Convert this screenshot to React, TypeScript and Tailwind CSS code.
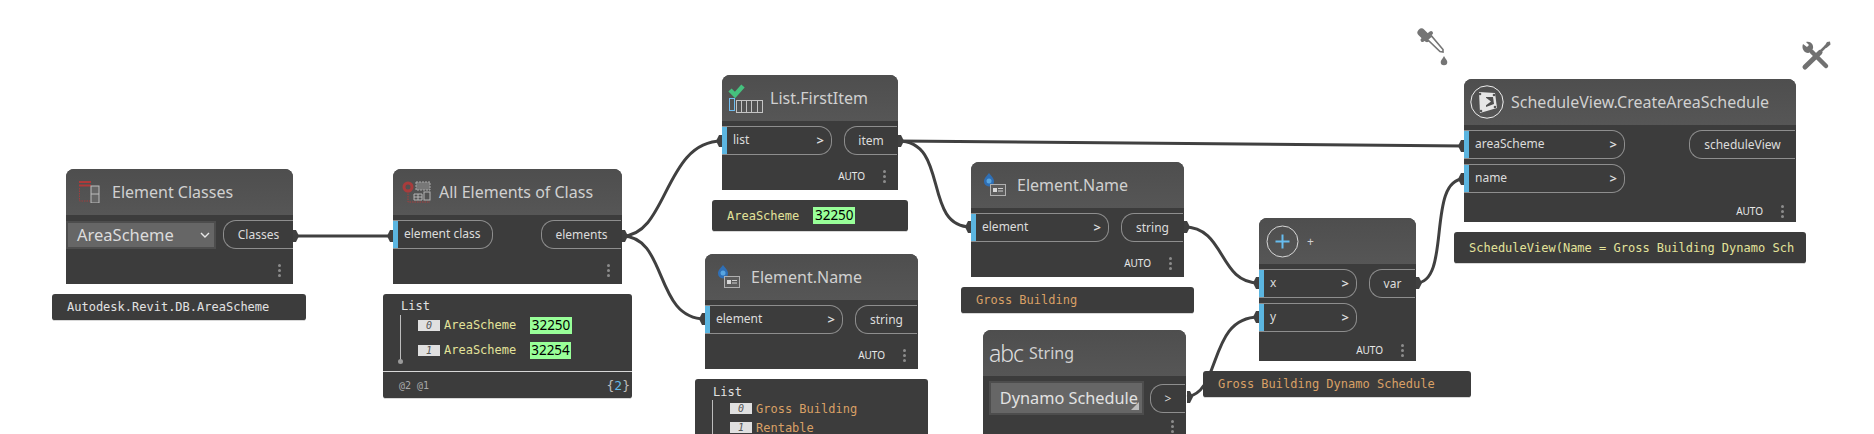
import type { ReactNode } from "react";

const sans = "font-['Noto_Sans',sans-serif]";
const mono = "font-['DejaVu_Sans_Mono',monospace]";

const wires = [
  "M293 236 L393 236",
  "M622 236 C668 236 664 141 722 141",
  "M622 236 C668 236 654 319 705 319",
  "M898 141 L1464 146",
  "M898 141 C950 141 922 227 971 227",
  "M1184 227 C1226 227 1218 283 1259 283",
  "M1187 397 C1222 392 1208 317 1259 317",
  "M1416 283 C1452 283 1426 179 1464 179",
];

const outPorts = [
  [293, 236],
  [622, 236],
  [898, 141],
  [1184, 227],
  [1187, 397],
  [1416, 283],
];
const inPorts = [
  [393, 236],
  [722, 141],
  [705, 319],
  [971, 227],
  [1259, 283],
  [1259, 317],
  [1464, 146],
  [1464, 179],
];

function Dots() {
  return (
    <div className="flex flex-col gap-[2px]">
      <span className="h-[3px] w-[3px] rounded-full bg-[#8c8c8c]" />
      <span className="h-[3px] w-[3px] rounded-full bg-[#8c8c8c]" />
      <span className="h-[3px] w-[3px] rounded-full bg-[#8c8c8c]" />
    </div>
  );
}

function Node({
  className,
  icon,
  title,
  auto = true,
  children,
  titleClass = "text-[16px]",
}: {
  className: string;
  icon: ReactNode;
  title: string;
  auto?: boolean;
  children: ReactNode;
  titleClass?: string;
}) {
  return (
    <div className={`absolute flex flex-col bg-[#3c3c3c] rounded-t-[8px] ${sans} ${className}`}>
      <div className="flex h-[46px] shrink-0 items-center rounded-t-[8px] bg-gradient-to-b from-[#4e4e4e] to-[#565656] text-[#d0d0d0]">
        {icon}
        <span className={titleClass}>{title}</span>
      </div>
      <div className="flex flex-col gap-[5px] pt-[5px]">{children}</div>
      <div className="flex flex-1 items-center justify-end gap-[18px] pt-[7px] pr-[12px]">
        {auto && <span className="text-[10px] text-[#e8e8e8]">AUTO</span>}
        <Dots />
      </div>
    </div>
  );
}

function InPill({ label, className }: { label: string; className: string }) {
  return (
    <div
      className={`flex h-[29px] items-center justify-between rounded-r-[13px] border border-l-0 border-[#8e8e8e] pr-[7px] pl-[11px] shadow-[inset_5px_0_0_#5bb5e0] text-[12px] text-[#dcdcdc] ${className}`}
    >
      <span className="pb-[1px]">{label}</span>
      <span className="text-[13px] font-semibold">&gt;</span>
    </div>
  );
}

function OutPill({ label, className }: { label: string; className: string }) {
  return (
    <div
      className={`flex h-[29px] items-center justify-center rounded-l-[13px] border border-r-0 border-[#8e8e8e] pt-[1px] text-[12px] text-[#dcdcdc] ${className}`}
    >
      {label}
    </div>
  );
}

function Info({ className, children }: { className: string; children: ReactNode }) {
  return (
    <div
      className={`absolute rounded-[3px] border-b border-[#d8d8d8] bg-[#3c3c3c] text-[12px] ${mono} ${className}`}
    >
      {children}
    </div>
  );
}

function Chip({ value, className = "w-[42px]" }: { value: string; className?: string }) {
  return (
    <span
      className={`flex h-[17px] items-center justify-center bg-[#99ff99] text-[13.5px] text-black ${sans} ${className}`}
    >
      {value}
    </span>
  );
}

function Index({ n }: { n: string }) {
  return (
    <span className="flex h-[11px] w-[22px] items-center justify-center bg-[#e0e0e0] text-[10px] italic text-[#555]">
      {n}
    </span>
  );
}

function ListTree({ height }: { height: string }) {
  return (
    <div className={`absolute left-[17px] top-[21px] w-[1px] bg-[#bdbdbd] ${height}`}>
      <span className="absolute -left-[2px] -bottom-[2px] h-[5px] w-[5px] rounded-full bg-[#9a9a9a]" />
    </div>
  );
}

function ClassesIcon() {
  return (
    <svg width="26" height="22" viewBox="0 0 26 22" className="ml-[10px] mr-[10px]" fill="none">
      <path d="M3 1H15M3 4.500H15" stroke="#b03a3a" strokeWidth="2" />
      <path d="M3.500 7V20H14" stroke="#9c3f3f" strokeDasharray="1.500 1" />
      <rect x="15" y="5" width="8" height="17" fill="#666" stroke="#bdbdbd" />
      <path d="M15 13H23" stroke="#bdbdbd" />
    </svg>
  );
}

function AllElementsIcon() {
  return (
    <svg width="30" height="24" viewBox="0 0 30 24" className="ml-[9px] mr-[7px]" fill="none">
      <circle cx="6" cy="7" r="4" fill="none" stroke="#a83c3c" strokeWidth="3" />
      <path d="M6 11V22H28" stroke="#a83c3c" strokeDasharray="1.500 1" />
      <rect x="14" y="2" width="14" height="8" fill="#777" stroke="#a8a8a8" strokeDasharray="2 1" />
      <path d="M12 14H20V20H12ZM16 14V20M12 17H20" stroke="#b5b5b5" />
      <rect x="22" y="12" width="6" height="8" stroke="#b5b5b5" />
    </svg>
  );
}

function FirstItemIcon() {
  return (
    <svg width="36" height="30" viewBox="0 0 36 30" className="ml-[6px] mr-[6px]" fill="none">
      <path d="M2 7L7 12L15 3" stroke="#45c17e" strokeWidth="4.500" />
      <rect x="1.500" y="15.500" width="5" height="12" stroke="#6fbdf0" />
      <rect x="8.500" y="17.500" width="26" height="12" stroke="#c4c4c4" />
      <path d="M13.500 18V29M18.500 18V29M23.500 18V29M29.500 18V29" stroke="#c4c4c4" />
    </svg>
  );
}

function NameIcon() {
  return (
    <svg width="24" height="24" viewBox="0 0 24 24" className="ml-[12px] mr-[10px]" fill="none">
      <path d="M6 0C8 3 11 5 11 8.500A5 5 0 0 1 1 8.500C1 5 4 3 6 0Z" fill="#2f6fb5" />
      <circle cx="6" cy="8" r="2.500" fill="#58a5e0" />
      <rect x="7.500" y="11.500" width="15" height="11" fill="#5c5c5c" stroke="#b0b0b0" />
      <rect x="10" y="15" width="4" height="4" fill="#d8d8d8" />
      <path d="M15 15.500H20M15 18H20" stroke="#cfcfcf" />
    </svg>
  );
}

function PlusIcon() {
  return (
    <svg width="33" height="33" viewBox="0 0 33 33" className="ml-[7px] mr-[8px]" fill="none">
      <circle cx="16.500" cy="16.500" r="15.500" stroke="#d8d8d8" />
      <path d="M16.500 9.500V23.500M9.500 16.500H23.500" stroke="#67bdf0" strokeWidth="2" />
    </svg>
  );
}

function ScheduleIcon() {
  return (
    <svg width="34" height="34" viewBox="0 0 34 34" className="ml-[6px] mr-[7px]" fill="none">
      <circle cx="17" cy="17" r="16.200" stroke="#eeeeee" />
      <path d="M9 7L25 8L27 23L10 28Z" fill="#e6e6e6" />
      <path d="M16 12H23L24 19L16 22Z" fill="#4f4f4f" />
      <path d="M15 12L21 16.500L15 21Z" fill="#e6e6e6" />
      <circle cx="10" cy="9" r="1.300" fill="#555" />
      <circle cx="24" cy="10" r="1.300" fill="#555" />
      <circle cx="25" cy="22" r="1.300" fill="#555" />
      <circle cx="11" cy="26" r="1.300" fill="#555" />
    </svg>
  );
}

export default function App() {
  return (
    <div className="relative h-[434px] w-[1874px] overflow-hidden bg-white">
      {/* wires */}
      <svg className="absolute inset-0" width="1874" height="434" fill="none">
        {wires.map((d) => (
          <path key={d} d={d} stroke="#404040" strokeWidth="3" />
        ))}
        {outPorts.map(([x, y]) => (
          <path key={`o${x}`} d={`M${x} ${y - 6}L${x + 3} ${y - 6}L${x + 6} ${y}L${x + 3} ${y + 6}L${x} ${y + 6}Z`} fill="#404040" />
        ))}
        {inPorts.map(([x, y]) => (
          <path key={`i${x}${y}`} d={`M${x} ${y - 6}L${x - 3} ${y - 6}L${x - 6} ${y}L${x - 3} ${y + 6}L${x} ${y + 6}Z`} fill="#404040" />
        ))}
      </svg>

      {/* dropper */}
      <svg className="absolute left-[1416px] top-[27px]" width="34" height="42" viewBox="0 0 34 42" fill="none">
        <path d="M5.500 5.500L11 11" stroke="#757575" strokeWidth="8" strokeLinecap="round" />
        <path d="M6.500 13L15 6" stroke="#757575" strokeWidth="4" strokeLinecap="round" />
        <path d="M11.500 12.500L15.500 9L27 22.500L27 25L24 24.500Z" fill="#fff" stroke="#757575" strokeWidth="1.600" />
        <path d="M28 29C29.500 32 31.300 33.500 31.300 35A3.300 3.300 0 0 1 24.700 35C24.700 33.500 26.500 32 28 29Z" fill="#757575" />
      </svg>

      {/* tools */}
      <svg className="absolute left-[1800px] top-[40px]" width="32" height="32" viewBox="0 0 32 32" fill="none">
        <path d="M5 27L20 12.500" stroke="#717171" strokeWidth="5" strokeLinecap="round" />
        <path d="M19 13L26 6" stroke="#717171" strokeWidth="2.500" />
        <path d="M24.500 6L27 2L30 1.500L30.500 4.500L26.500 8Z" fill="#717171" />
        <path d="M11 11L26 26" stroke="#717171" strokeWidth="4.500" strokeLinecap="round" />
        <path d="M3 4L7 7L9 5L6 2C10 0.500 14 4 13 8.500L8.500 13C5 13.500 1 9 3 4Z" fill="#717171" />
      </svg>

      {/* Element Classes */}
      <Node className="left-[66px] top-[169px] h-[115px] w-[227px]" icon={<ClassesIcon />} title="Element Classes" auto={false}>
        <div className="flex items-center gap-[7px]">
          <div className="flex h-[28px] w-[150px] items-center justify-between border-2 border-[#4d4d4d] bg-[#666] pt-[1px] pr-[4px] pl-[9px] text-[16.500px] text-[#dcdcdc]">
            AreaScheme
            <svg width="10" height="6" viewBox="0 0 10 6" fill="none">
              <path d="M1 1L5 5L9 1" stroke="#e8e8e8" strokeWidth="1.400" />
            </svg>
          </div>
          <OutPill label="Classes" className="w-[70px]" />
        </div>
      </Node>
      <Info className="left-[52px] top-[294px] flex h-[27px] w-[254px] items-center px-[15px] text-[#e2e2e2]">
        Autodesk.Revit.DB.AreaScheme
      </Info>

      {/* All Elements of Class */}
      <Node className="left-[393px] top-[169px] h-[115px] w-[229px]" icon={<AllElementsIcon />} title="All Elements of Class" auto={false}>
        <div className="flex items-center justify-between pr-px">
          <div className="flex h-[29px] w-[100px] items-center rounded-r-[13px] border border-l-0 border-[#8e8e8e] pl-[11px] pb-[1px] shadow-[inset_5px_0_0_#5bb5e0] text-[12px] text-[#dcdcdc]">
            element class
          </div>
          <OutPill label="elements" className="w-[80px]" />
        </div>
      </Node>
      <Info className="left-[383px] top-[294px] h-[105px] w-[249px] text-[#e2e2e2]">
        <ListTree height="h-[47px]" />
        <div className="flex h-[77px] flex-col pl-[18px] pt-[5px]">
          <span className="leading-[15px]">List</span>
          <div className="mt-[2px] ml-[17px] flex items-center gap-[4px] text-[#e3e39a]">
            <Index n="0" />
            <span className="w-[82px]">AreaScheme</span>
            <Chip value="32250" />
          </div>
          <div className="mt-[7px] ml-[17px] flex items-center gap-[4px] text-[#e3e39a]">
            <Index n="1" />
            <span className="w-[82px]">AreaScheme</span>
            <Chip value="32254" className="w-[41px]" />
          </div>
        </div>
        <div className="flex h-[28px] items-center justify-between border-t border-[#d8d8d8] pl-[16px] pr-[2px] text-[10px] text-[#a8a8a8]">
          <span>@2 @1</span>
          <span className="text-[13px] text-[#bdbdbd]">
            {"{"}
            <span className="text-[#63b8e6]">2</span>
            {"}"}
          </span>
        </div>
      </Info>

      {/* List.FirstItem */}
      <Node className="left-[722px] top-[75px] h-[115px] w-[176px]" icon={<FirstItemIcon />} title="List.FirstItem">
        <div className="flex items-center justify-between pr-px">
          <InPill label="list" className="w-[110px]" />
          <OutPill label="item" className="w-[53px]" />
        </div>
      </Node>
      <Info className="left-[712px] top-[200px] flex h-[32px] w-[196px] items-center gap-[14px] px-[15px] text-[#e3e39a]">
        <span>AreaScheme</span>
        <Chip value="32250" />
      </Info>

      {/* Element.Name lower */}
      <Node className="left-[705px] top-[254px] h-[115px] w-[213px]" icon={<NameIcon />} title="Element.Name">
        <div className="flex items-center justify-between pr-px">
          <InPill label="element" className="w-[138px]" />
          <OutPill label="string" className="w-[62px]" />
        </div>
      </Node>
      <Info className="left-[695px] top-[379px] h-[80px] w-[233px] text-[#e2e2e2]">
        <ListTree height="h-[47px]" />
        <div className="flex flex-col pl-[18px] pt-[6px]">
          <span className="leading-[15px]">List</span>
          <div className="mt-[1px] ml-[17px] flex h-[15px] items-center gap-[4px] text-[#d9a066]">
            <Index n="0" />
            Gross Building
          </div>
          <div className="mt-[4px] ml-[17px] flex h-[15px] items-center gap-[4px] text-[#d9a066]">
            <Index n="1" />
            Rentable
          </div>
        </div>
      </Info>

      {/* Element.Name upper */}
      <Node className="left-[971px] top-[162px] h-[115px] w-[213px]" icon={<NameIcon />} title="Element.Name">
        <div className="flex items-center justify-between pr-px">
          <InPill label="element" className="w-[138px]" />
          <OutPill label="string" className="w-[62px]" />
        </div>
      </Node>
      <Info className="left-[961px] top-[287px] flex h-[27px] w-[233px] items-center px-[15px] text-[#d9a066]">
        Gross Building
      </Info>

      {/* String */}
      <div className={`absolute left-[983px] top-[330px] flex h-[115px] w-[203px] flex-col rounded-t-[8px] bg-[#3c3c3c] ${sans}`}>
        <div className="flex h-[46px] shrink-0 items-center rounded-t-[8px] bg-gradient-to-b from-[#4e4e4e] to-[#565656] text-[#d0d0d0]">
          <span className="ml-[6px] mr-[6px] text-[23px] font-light tracking-[-1px] text-[#dedede]">abc</span>
          <span className="text-[16px]">String</span>
        </div>
        <div className="flex items-center gap-[6px] pt-[5px] pl-[6px]">
          <div className="relative flex h-[34px] w-[155px] items-center justify-end border-2 border-[#4d4d4d] bg-[#666] pr-[4px] text-[16.300px] text-[#e2e2e2]">
            Dynamo Schedule
            <span className="absolute right-[3px] bottom-[3px] h-0 w-0 border-b-[8px] border-l-[8px] border-b-[#bdbdbd] border-l-transparent" />
          </div>
          <OutPill label=">" className="w-[35px] text-[11px]" />
        </div>
        <div className="flex justify-end pt-[5px] pr-[12px]">
          <Dots />
        </div>
      </div>

      {/* + */}
      <Node
        className="left-[1259px] top-[218px] h-[143px] w-[157px]"
        icon={<PlusIcon />}
        title="+"
        titleClass="text-[12px] mt-[1px]"
      >
        <div className="flex items-center justify-between pr-px">
          <InPill label="x" className="w-[98px]" />
          <OutPill label="var" className="w-[46px]" />
        </div>
        <InPill label="y" className="w-[98px]" />
      </Node>
      <Info className="left-[1203px] top-[371px] flex h-[27px] w-[268px] items-center px-[15px] text-[#d9a066]">
        Gross Building Dynamo Schedule
      </Info>

      {/* ScheduleView.CreateAreaSchedule */}
      <Node
        className="left-[1464px] top-[79px] h-[143px] w-[332px]"
        icon={<ScheduleIcon />}
        title="ScheduleView.CreateAreaSchedule"
      >
        <div className="flex items-center justify-between pr-px">
          <InPill label="areaScheme" className="w-[161px]" />
          <OutPill label="scheduleView" className="w-[106px]" />
        </div>
        <InPill label="name" className="w-[161px]" />
      </Node>
      <Info className="left-[1454px] top-[232px] flex h-[32px] w-[352px] items-center overflow-hidden whitespace-nowrap px-[15px] text-[#e3e39a]">
        ScheduleView(Name = Gross Building Dynamo Sch
      </Info>
    </div>
  );
}
